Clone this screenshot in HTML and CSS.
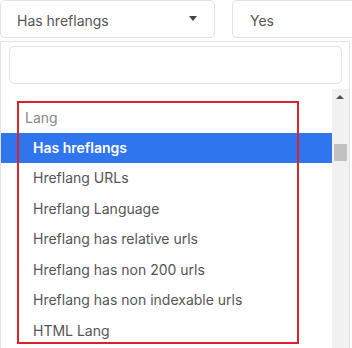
FILE: index.html
```html
<!DOCTYPE html>
<html>
<head>
    <title>Filter select</title>
    <link rel="stylesheet" href="styles.css">
</head>
<body>
    <div class="filters">
        <div class="select first">
            <span>Has hreflangs</span>
            <span class="caret"></span>
        </div>
        <div class="select second">
            <span>Yes</span>
        </div>
    </div>
    <div class="dropdown">
        <div class="search">
            <input type="text" class="search-input">
        </div>
        <div class="results">
            <ul class="options">
                <li class="group">Lang</li>
                <li class="option active">Has hreflangs</li>
                <li class="option">Hreflang URLs</li>
                <li class="option">Hreflang Language</li>
                <li class="option">Hreflang has relative urls</li>
                <li class="option">Hreflang has non 200 urls</li>
                <li class="option">Hreflang has non indexable urls</li>
                <li class="option">HTML Lang</li>
            </ul>
            <div class="scrollbar">
                <span class="arrow"></span>
                <span class="thumb"></span>
            </div>
        </div>
    </div>
    <div class="mark"></div>
</body>
</html>
```
FILE: styles.css
```css
body
{
    margin: 0;
    width: 352px;
    height: 348px;
    overflow: hidden;
    background-color: white;
    font-family: Inter, "Noto Sans", sans-serif;
    color: #555;
    position: relative;
}
.filters
{
    display: flex;
    gap: 17px;
}
.select
{
    height: 38px;
    box-sizing: border-box;
    border: 1px solid #e2e2e2;
    border-radius: 5px;
    display: flex;
    align-items: center;
    justify-content: space-between;
    font-size: 14px;
    color: #555;
}
.first
{
    width: 215px;
    padding: 2px 16px 0 16px;
}
.second
{
    flex: 1;
    padding: 2px 17px 0 17px;
    border-right: none;
    border-radius: 5px 0 0 5px;
}
.caret
{
    width: 0;
    height: 0;
    border-left: 4px solid transparent;
    border-right: 4px solid transparent;
    border-top: 5px solid #444;
    margin-top: -4px;
    margin-right: 1px;
}
.dropdown
{
    margin-top: 3px;
    width: 350px;
    height: 320px;
    box-sizing: border-box;
    border: 1px solid #e2e2e2;
    border-bottom: none;
}
.search
{
    padding: 4px 7px 5px 8px;
}
.search-input
{
    display: block;
    width: 100%;
    height: 38px;
    box-sizing: border-box;
    border: 1px solid #e2e2e2;
    border-radius: 5px;
    outline: none;
}
.results
{
    display: flex;
    height: 270px;
}
.options
{
    flex: 1;
    list-style: none;
    margin: 0;
    padding: 13px 0 0 0;
    font-size: 14px;
}
.group
{
    height: 31px;
    line-height: 31px;
    padding-left: 24px;
    color: #888;
}
.option
{
    height: 30.6px;
    line-height: 30px;
    padding-left: 32px;
    color: #555;
}
.active
{
    height: 30px;
    background-color: #2f76ee;
    color: white;
    font-weight: 600;
}
.scrollbar
{
    width: 17px;
    background-color: #f1f1f1;
    position: relative;
}
.arrow
{
    position: absolute;
    left: 4px;
    top: 6px;
    border-left: 4px solid transparent;
    border-right: 4px solid transparent;
    border-bottom: 4px solid #505050;
}
.thumb
{
    position: absolute;
    left: 2px;
    top: 55px;
    width: 13px;
    height: 17px;
    background-color: #c1c1c1;
}
.mark
{
    position: absolute;
    left: 17px;
    top: 101px;
    width: 282px;
    height: 243px;
    box-sizing: border-box;
    border: 2px solid #d8232f;
}
```
